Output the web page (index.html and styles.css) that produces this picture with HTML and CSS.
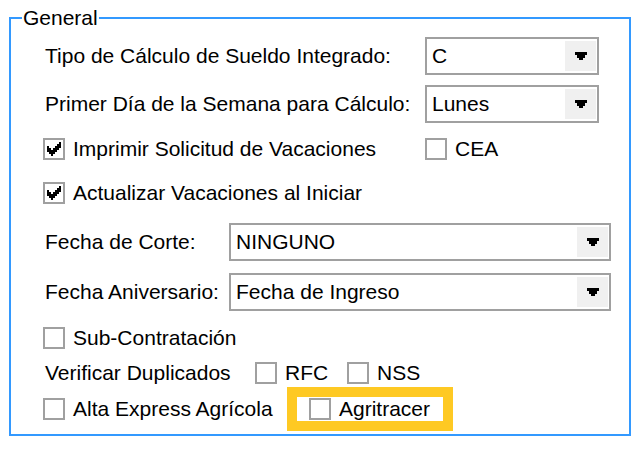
FILE: index.html
```html
<!DOCTYPE html>
<html lang="es">
<head>
<meta charset="utf-8">
<title>General</title>
<link rel="stylesheet" href="styles.css">
</head>
<body>
<div class="group">
  <span class="legend">General</span>

  <div class="row r1">
    <span class="label lw-a">Tipo de Cálculo de Sueldo Integrado:</span>
    <div class="combo cw-s"><span class="val">C</span><span class="btn"><svg width="12" height="8" viewBox="0 0 12 8"><path d="M0 0H12V3H10V6H8V8H4V6H2V3H0Z"/></svg></span></div>
  </div>

  <div class="row r2">
    <span class="label lw-a">Primer Día de la Semana para Cálculo:</span>
    <div class="combo cw-s"><span class="val">Lunes</span><span class="btn"><svg width="12" height="8" viewBox="0 0 12 8"><path d="M0 0H12V3H10V6H8V8H4V6H2V3H0Z"/></svg></span></div>
  </div>

  <div class="row r3">
    <label class="opt ow-a"><span class="chk"><svg width="14" height="14" viewBox="0 0 7 7" shape-rendering="crispEdges"><path d="M6 0h1v1h-1zM5 1h2v1h-2zM0 2h1v1h-1zM4 2h3v1h-3zM0 3h2v1h-2zM3 3h3v1h-3zM0 4h5v1h-5zM1 5h3v1h-3zM2 6h1v1h-1z"/></svg></span>Imprimir Solicitud de Vacaciones</label>
    <label class="opt"><span class="chk"></span>CEA</label>
  </div>

  <div class="row r4">
    <label class="opt"><span class="chk"><svg width="14" height="14" viewBox="0 0 7 7" shape-rendering="crispEdges"><path d="M6 0h1v1h-1zM5 1h2v1h-2zM0 2h1v1h-1zM4 2h3v1h-3zM0 3h2v1h-2zM3 3h3v1h-3zM0 4h5v1h-5zM1 5h3v1h-3zM2 6h1v1h-1z"/></svg></span>Actualizar Vacaciones al Iniciar</label>
  </div>

  <div class="row r5">
    <span class="label lw-b">Fecha de Corte:</span>
    <div class="combo cw-l"><span class="val">NINGUNO</span><span class="btn"><svg width="12" height="8" viewBox="0 0 12 8"><path d="M0 0H12V3H10V6H8V8H4V6H2V3H0Z"/></svg></span></div>
  </div>

  <div class="row r6">
    <span class="label lw-b">Fecha Aniversario:</span>
    <div class="combo cw-l"><span class="val">Fecha de Ingreso</span><span class="btn"><svg width="12" height="8" viewBox="0 0 12 8"><path d="M0 0H12V3H10V6H8V8H4V6H2V3H0Z"/></svg></span></div>
  </div>

  <div class="row r7">
    <label class="opt"><span class="chk"></span>Sub-Contratación</label>
  </div>

  <div class="row r8">
    <span class="label lw-c">Verificar Duplicados</span>
    <label class="opt ow-b"><span class="chk"></span>RFC</label>
    <label class="opt"><span class="chk"></span>NSS</label>
  </div>

  <div class="row r9">
    <label class="opt ow-c"><span class="chk"></span>Alta Express Agrícola</label>
    <div class="hl">
      <label class="opt"><span class="chk"></span>Agritracer</label>
    </div>
  </div>
</div>
</body>
</html>
```
FILE: styles.css
```css
html, body {
  margin: 0;
  background: #ffffff;
}

body {
  font-family: "Liberation Sans", Arial, sans-serif;
  font-size: 21px;
  color: #000000;
}

.group {
  position: relative;
  box-sizing: border-box;
  margin: 17px 10px 0 9px;
  height: 419px;
  border: 2px solid #3399ff;
  padding: 18px 0 0 32px;
}

.legend {
  position: absolute;
  left: 11px;
  top: -12px;
  padding: 0 1px;
  line-height: 21px;
  background: #ffffff;
}

.row {
  display: flex;
  align-items: center;
  line-height: 22px;
}

.r1 { margin-top: 0; }
.r2 { margin-top: 10px; }
.r3 { margin-top: 15px; }
.r4 { margin-top: 22px; }
.r5 { margin-top: 19px; }
.r6 { margin-top: 12px; }
.r7 { margin-top: 16px; }
.r8 { margin-top: 13px; }
.r9 { margin-top: 3px; }

.label {
  margin-left: 2px;
  white-space: nowrap;
  flex: none;
}

.lw-a { width: 380px; }
.lw-b { width: 184px; }
.lw-c { width: 210px; }

.combo {
  display: flex;
  align-items: center;
  box-sizing: border-box;
  height: 38px;
  border: 2px solid #a0a0a0;
  background: #ffffff;
  flex: none;
}

.cw-s { width: 174px; }
.cw-l { width: 382px; }

.combo .val {
  flex: 1;
  padding-left: 5px;
  white-space: nowrap;
}

.combo .btn {
  align-self: stretch;
  width: 31px;
  margin: 2px 1px 2px 0;
  background: #f0f0f0;
  display: flex;
  align-items: center;
  justify-content: center;
}

.combo .btn svg {
  display: block;
  fill: #000000;
}

.opt {
  display: flex;
  align-items: center;
  gap: 8px;
  white-space: nowrap;
  flex: none;
}

.ow-a { width: 382px; }
.ow-b { width: 92px; }
.ow-c { width: 244px; }

.chk {
  box-sizing: border-box;
  width: 22px;
  height: 22px;
  border: 2px solid #a0a0a0;
  background: #ffffff;
  display: flex;
  align-items: center;
  justify-content: center;
  flex: none;
}

.chk svg {
  display: block;
  fill: #000000;
}

.hl {
  border: 10px solid #fec923;
  background: #ffffff;
  width: 134px;
  height: 24px;
  padding-left: 12px;
  display: flex;
  align-items: center;
}
```
